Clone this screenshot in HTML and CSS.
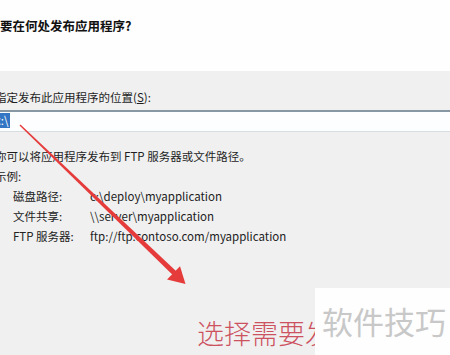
FILE: index.html
```html
<!DOCTYPE html>
<html lang="zh-CN">
<head>
<meta charset="utf-8">
<title>发布向导</title>
<link rel="stylesheet" href="styles.css">
</head>
<body>
<div class="page">
  <header class="head">
    <h1 class="title">要在何处发布应用程序?</h1>
  </header>
  <main class="body">
    <div class="content">
      <label class="lbl">指定发布此应用程序的位置(<u>S</u>):</label>
      <div class="input"><span class="sel">c:\</span></div>
      <p class="line">你可以将应用程序发布到 FTP 服务器或文件路径。</p>
      <p class="line">示例:</p>
      <div class="grid">
        <span class="k">磁盘路径:</span><span class="v">c:\deploy\myapplication</span>
        <span class="k">文件共享:</span><span class="v">\\server\myapplication</span>
        <span class="k">FTP 服务器:</span><span class="v">ftp://ftp.contoso.com/myapplication</span>
      </div>
    </div>
    <p class="caption">选择需要发布的位置</p>
  </main>
  <svg class="arrow" width="450" height="355" viewBox="0 0 450 355">
    <polygon points="19.5,125.5 20.5,124.5 176,271 172.5,274.8" fill="#e63b3b"/>
    <polygon points="185.5,284 167,279.6 180,266.2" fill="#e63b3b"/>
  </svg>
  <div class="watermark">软件技巧</div>
</div>
</body>
</html>
```

FILE: styles.css
```css
* { box-sizing: border-box; }
html, body { margin: 0; padding: 0; }
body {
  width: 450px;
  height: 355px;
  overflow: hidden;
  background: #f0f0f0;
  font-family: "Noto Sans CJK SC", "Noto Sans", sans-serif;
  color: #1e1e1e;
}
.page {
  position: relative;
  width: 450px;
  height: 355px;
  overflow: hidden;
  background: #f0f0f0;
}
.head {
  height: 71px;
  background: #fefefe;
  padding-top: 18px;
}
.title {
  margin: 0;
  font-size: 12.5px;
  line-height: 16px;
  font-weight: 700;
  color: #111;
}
.body {
  padding-top: 18px;
}
.content {
  margin-left: -5px;
  font-size: 11.5px;
}
.lbl {
  display: block;
  line-height: 16px;
  height: 16px;
  margin-bottom: 5px;
}
.lbl u { text-decoration: underline; }
.input {
  margin-left: -10px;
  width: 480px;
  height: 22px;
  background: #fdfeff;
  border-top: 2px solid #8797a3;
  border-bottom: 1px solid #d6dee4;
  padding-top: 1px;
  padding-left: 10px;
}
.sel {
  display: inline-block;
  background: #3376c4;
  color: #fff;
  line-height: 15px;
  height: 15px;
  padding-right: 1px;
  vertical-align: top;
}
.line {
  margin: 0;
  line-height: 20px;
}
.input + .line { margin-top: 14px; }
.grid {
  display: grid;
  grid-template-columns: 77px auto;
  padding-left: 18px;
  line-height: 20px;
}
.k { color: #222; }
.v { color: #222; }
.caption {
  margin: 71px 0 0 197px;
  font-size: 27px;
  line-height: 32px;
  font-weight: 300;
  color: #cc5260;
  white-space: nowrap;
}
.arrow {
  position: absolute;
  left: 0;
  top: 0;
  pointer-events: none;
}
.watermark {
  position: absolute;
  left: 315px;
  top: 288px;
  width: 135px;
  height: 67px;
  background: #fefefe;
  padding: 13px 0 0 7px;
  font-size: 31px;
  line-height: 40px;
  color: #c8c8c8;
  white-space: nowrap;
}
```
